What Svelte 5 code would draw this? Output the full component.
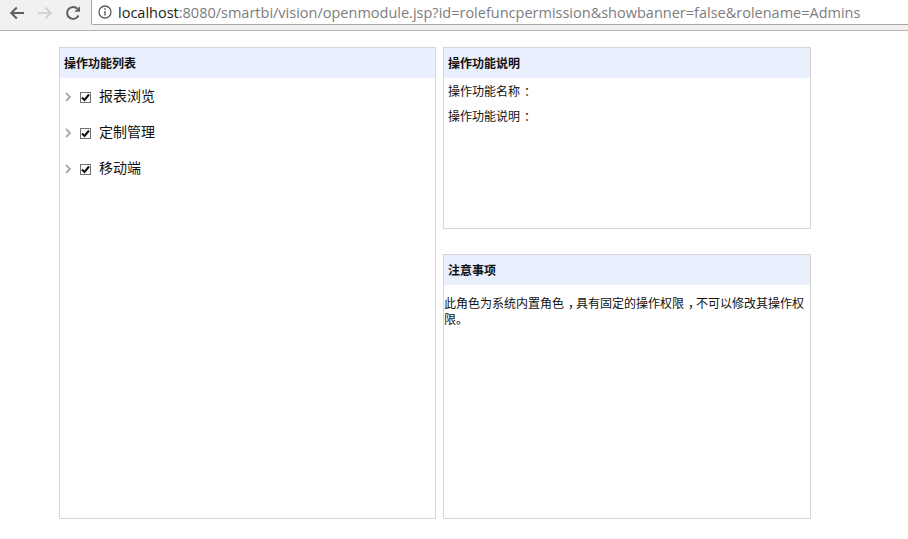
<script>
  const items = ["报表浏览", "定制管理", "移动端"];
</script>

<div class="page">
  <header class="toolbar">
    <button class="nav" aria-label="back">
      <svg width="18" height="18" viewBox="0 0 18 18"><path d="M16 9H3.500M8.800 3.500 3.200 9l5.600 5.500" fill="none" stroke="#5f5f5f" stroke-width="2"/></svg>
    </button>
    <button class="nav" aria-label="forward">
      <svg width="18" height="18" viewBox="0 0 18 18"><path d="M2 9h12.500M9.200 3.500 14.800 9l-5.600 5.500" fill="none" stroke="#d2d2d0" stroke-width="2"/></svg>
    </button>
    <button class="nav" aria-label="reload">
      <svg width="18" height="18" viewBox="0 0 18 18"><path d="M14.500 11.500A6 6 0 1 1 13.500 4.800" fill="none" stroke="#5f5f5f" stroke-width="2"/><path d="M10.500 7.800H16V2.300z" fill="#5f5f5f"/></svg>
    </button>
    <div class="omnibox">
      <svg class="info" width="14" height="14" viewBox="0 0 14 14"><circle cx="7" cy="7" r="6" fill="none" stroke="#5a5a5a" stroke-width="1.300"/><path d="M6.300 6h1.400v4.500H6.300zM6.300 3.300h1.400v1.400H6.300z" fill="#5a5a5a"/></svg>
      <span class="url"><span class="host">localhost</span>:8080/smartbi/vision/openmodule.jsp?id=rolefuncpermission&amp;showbanner=false&amp;rolename=Admins</span>
    </div>
  </header>

  <main class="content">
    <section class="panel list-panel">
      <h2>操作功能列表</h2>
      <ul>
        {#each items as item}
          <li>
            <svg class="chev" width="7" height="10" viewBox="0 0 7 10"><path d="M1 1l4 4-4 4" fill="none" stroke="#a8a8a8" stroke-width="1.800"/></svg>
            <span class="check">
              <svg width="9" height="9" viewBox="0 0 9 9"><path d="M1 4.500l2.500 2.500L8 1.500" fill="none" stroke="#111" stroke-width="2"/></svg>
            </span>
            <span class="label">{item}</span>
          </li>
        {/each}
      </ul>
    </section>

    <div class="side">
      <section class="panel info-panel">
        <h2>操作功能说明</h2>
        <p class="field first">操作功能名称<span class="punct">：</span></p>
        <p class="field">操作功能说明<span class="punct">：</span></p>
      </section>
      <section class="panel note-panel">
        <h2>注意事项</h2>
        <p class="note">此角色为系统内置角色<span class="punct">，</span>具有固定的操作权限<span class="punct">，</span>不可以修改其操作权<br />限。</p>
      </section>
    </div>
  </main>
</div>

<style>
  :global(body) {
    margin: 0;
    background: #fff;
    font-family: "Noto Sans CJK SC", "Liberation Sans", sans-serif;
    color: #111;
  }

  .page {
    width: 908px;
    height: 539px;
    overflow: hidden;
  }

  .toolbar {
    height: 31px;
    box-sizing: border-box;
    display: flex;
    align-items: flex-start;
    padding-left: 3px;
    background: #f2f1ef;
    border-bottom: 1px solid #b5b3b0;
  }

  .nav {
    width: 28px;
    height: 25px;
    padding: 0;
    margin: 0;
    border: 0;
    background: none;
    display: flex;
    align-items: center;
    justify-content: center;
    flex: none;
  }

  .omnibox {
    margin-left: 4px;
    flex: 1;
    height: 25px;
    box-sizing: border-box;
    background: #fff;
    border-left: 1px solid #a9a8a6;
    border-bottom: 1px solid #a9a8a6;
    border-bottom-left-radius: 2px;
    display: flex;
    align-items: center;
    padding-left: 6px;
    white-space: nowrap;
    overflow: hidden;
  }

  .info {
    flex: none;
  }

  .url {
    margin-left: 6px;
    font-family: "Open Sans", sans-serif;
    font-size: 14.500px;
    color: #7d7d7d;
  }

  .host {
    color: #222;
  }

  .content {
    display: flex;
    gap: 7px;
    padding: 16px 0 0 59px;
  }

  .panel {
    box-sizing: border-box;
    border: 1px solid #d6d6d8;
    background: #fff;
  }

  .panel h2 {
    margin: 0;
    height: 30px;
    padding-left: 4px;
    background: #e9effc;
    font-size: 12px;
    font-weight: 700;
    line-height: 30px;
  }

  .list-panel {
    width: 377px;
    height: 472px;
  }

  .list-panel ul {
    list-style: none;
    margin: 0;
    padding: 0;
  }

  .list-panel li {
    height: 36px;
    display: flex;
    align-items: center;
    font-size: 14px;
  }

  .chev {
    margin: 2px 0 0 5px;
  }

  .check {
    width: 11px;
    height: 11px;
    box-sizing: border-box;
    margin: 2px 0 0 8px;
    border: 1px solid #707070;
    background: #fff;
    display: flex;
    align-items: center;
    justify-content: center;
  }

  .label {
    margin: 0 0 2px 8px;
  }

  .side {
    width: 368px;
    display: flex;
    flex-direction: column;
    gap: 25px;
  }

  .info-panel {
    height: 182px;
  }

  .note-panel {
    height: 265px;
  }

  .field {
    margin: 0 0 7px;
    padding-left: 4px;
    font-size: 12px;
    line-height: 18px;
  }

  .field.first {
    margin-top: 4px;
  }

  .note {
    margin: 10px 0 0;
    font-size: 12px;
    line-height: 16px;
  }

  /* full-width punctuation sits centred in its cell, not at the left */
  .punct {
    padding-left: 4px;
    letter-spacing: -4px;
  }
</style>
